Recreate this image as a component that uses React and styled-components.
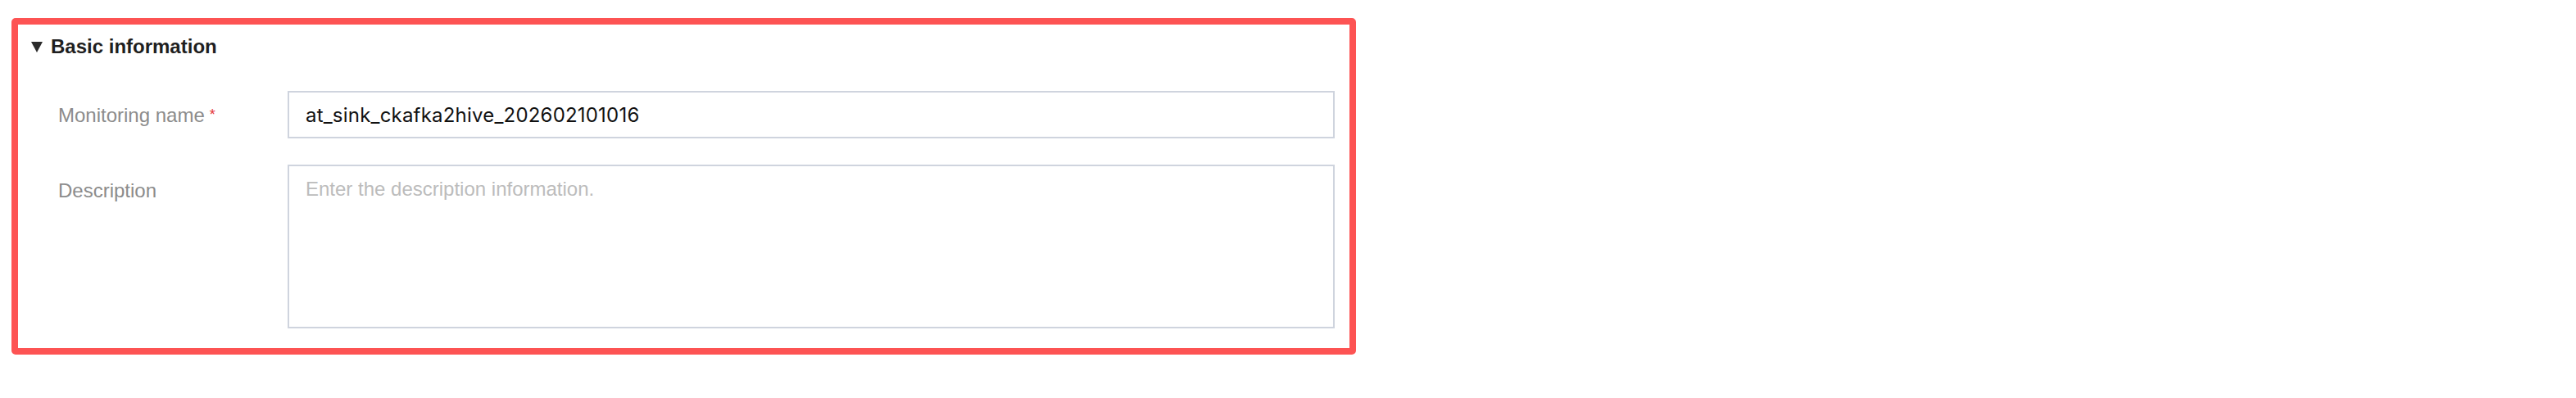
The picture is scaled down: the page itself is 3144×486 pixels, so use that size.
import React from 'react';
import styled, { createGlobalStyle } from 'styled-components';

const GlobalStyle = createGlobalStyle`
  html, body {
    margin: 0;
    padding: 0;
    background: #fff;
    font-family: "Liberation Sans", Arial, sans-serif;
  }
`;

const Page = styled.div`
  padding: 22px 14px;
`;

const Panel = styled.section`
  width: 1641px;
  box-sizing: border-box;
  border: 8px solid #fd5353;
  border-radius: 5px;
  padding: 15px 18px 24px 16px;
`;

const Header = styled.div`
  display: flex;
  align-items: center;
  gap: 10px;
  height: 24px;
  font-size: 24px;
  font-weight: 700;
  color: #1f1f1f;
`;

const Caret = styled.span`
  width: 0;
  height: 0;
  border-left: 7px solid transparent;
  border-right: 7px solid transparent;
  border-top: 13px solid #2b2b2b;
  margin-top: 1px;
`;

const Form = styled.div`
  margin-top: 42px;
  padding-left: 33px;
  display: flex;
  flex-direction: column;
  gap: 32px;
`;

const Row = styled.div`
  display: grid;
  grid-template-columns: 280px 1fr;
  align-items: ${(p) => (p.$top ? 'start' : 'center')};
`;

const Label = styled.label`
  font-size: 24px;
  color: #8c8c8c;
  padding-top: ${(p) => (p.$top ? '18px' : '0')};
  line-height: 28px;
`;

const Required = styled.span`
  color: #e5373a;
  font-size: 18px;
  margin-left: 6px;
  vertical-align: 3px;
`;

const Input = styled.input`
  box-sizing: border-box;
  height: 58px;
  width: 100%;
  border: 2px solid #cfd4de;
  border-radius: 0;
  padding: 0 20px;
  font-family: Inter, "Liberation Sans", sans-serif;
  font-size: 24px;
  letter-spacing: 0.2px;
  color: #111;
  outline: none;
`;

const TextArea = styled.textarea`
  box-sizing: border-box;
  display: block;
  height: 200px;
  width: 100%;
  border: 2px solid #cfd4de;
  border-radius: 0;
  padding: 12px 20px;
  font-family: "Liberation Sans", Arial, sans-serif;
  font-size: 24px;
  line-height: 32px;
  resize: none;
  outline: none;

  &::placeholder {
    color: #bcbcbc;
  }
`;

export default function App() {
  return (
    <Page>
      <GlobalStyle />
      <Panel>
        <Header>
          <Caret />
          Basic information
        </Header>
        <Form>
          <Row>
            <Label>
              Monitoring name<Required>*</Required>
            </Label>
            <Input defaultValue="at_sink_ckafka2hive_202602101016" />
          </Row>
          <Row $top>
            <Label $top>Description</Label>
            <TextArea placeholder="Enter the description information." />
          </Row>
        </Form>
      </Panel>
    </Page>
  );
}
